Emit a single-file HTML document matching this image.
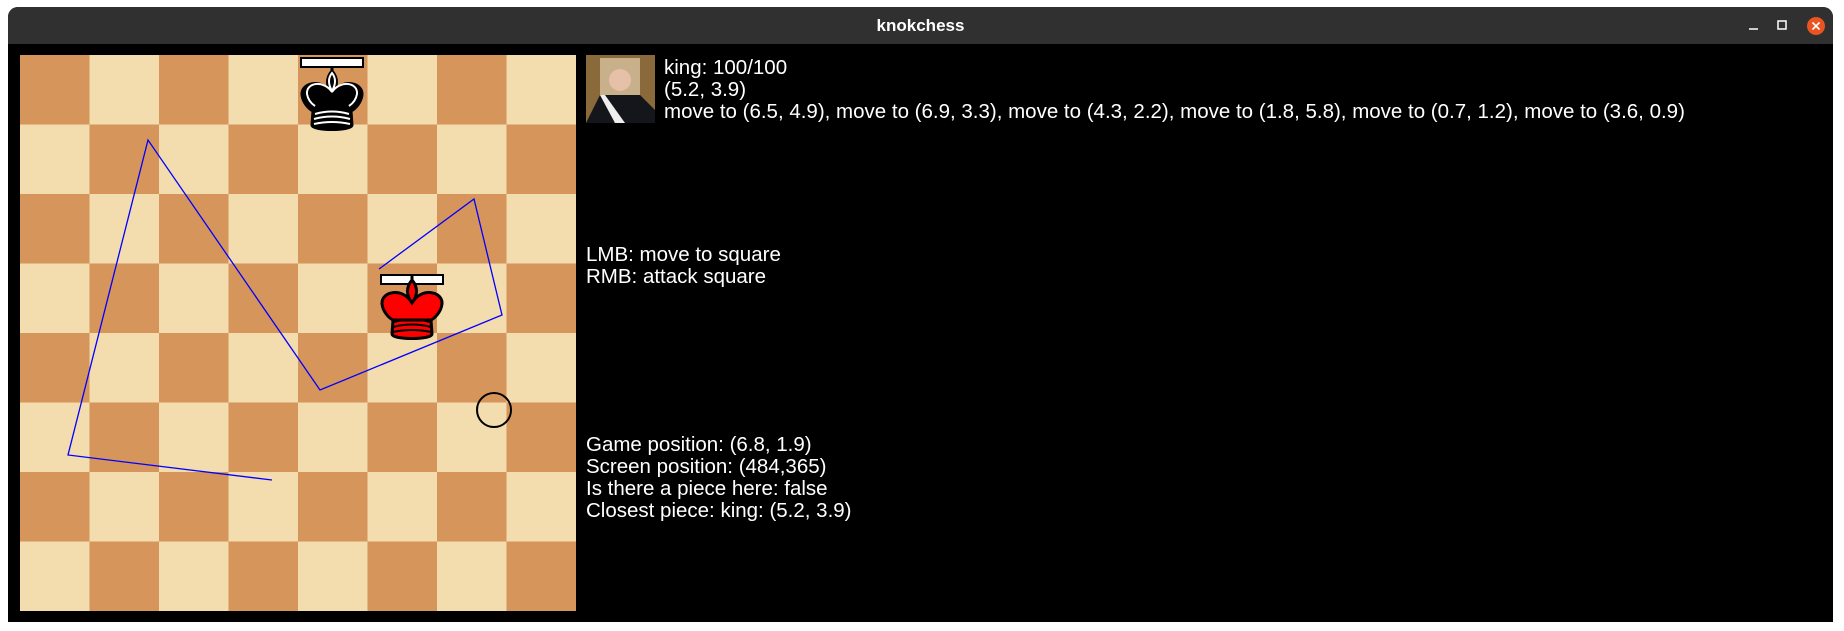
<!DOCTYPE html>
<html><head><meta charset="utf-8"><style>
body{margin:0;width:1844px;height:631px;background:#fff;overflow:hidden;position:relative;font-family:"Liberation Sans",sans-serif}
#win{position:absolute;left:8px;top:7px;width:1825px;height:615px;background:#000;border-radius:10px 10px 0 0;overflow:hidden}
#tb{position:absolute;left:0;top:0;right:0;height:37px;background:#303030;color:#fff;font-weight:bold;font-size:17px;text-align:center;line-height:37px}
.t{position:absolute;color:#fff;font-size:20.5px;line-height:22px;white-space:nowrap}
</style></head><body>
<div id="win"><div id="tb">knokchess</div></div>
<svg style="position:absolute;left:0;top:0" width="1844" height="631">
<defs>
<pattern id="bd" width="139" height="139" patternUnits="userSpaceOnUse" x="20" y="55">
<rect width="139" height="139" fill="#f3dcae"/>
<rect width="69.5" height="69.5" fill="#d6955a"/>
<rect x="69.5" y="69.5" width="69.5" height="69.5" fill="#d6955a"/>
</pattern>
<g id="king">
<line x1="0" y1="-29" x2="0" y2="-24" stroke="#000" stroke-width="3"/>
<path d="M0 -25 C-6 -18 -6 -10 0 -2 C6 -10 6 -18 0 -25Z" stroke="#000" stroke-width="3"/>
<path d="M0 -2 C-9 -18 -31 -14 -30 -1 C-29 7 -23 13 -19 15 L19 15 C23 13 29 7 30 -1 C31 -14 9 -18 0 -2Z" stroke="#000" stroke-width="3"/>
<path d="M-19 15 L-20 29 C-20 35 20 35 20 29 L19 15Z" stroke="#000" stroke-width="3"/>
</g>
</defs>
<line x1="1749" y1="29" x2="1758" y2="29" stroke="#fff" stroke-width="1.5"/>
<rect x="1778" y="21" width="8" height="8" fill="none" stroke="#fff" stroke-width="1.5"/>
<circle cx="1816" cy="26" r="9" fill="#e95420"/><path d="M1812.5 22.5L1819.5 29.5M1819.5 22.5L1812.5 29.5" stroke="#fff" stroke-width="1.6"/>
<rect x="20" y="55" width="556" height="556" fill="url(#bd)"/>
<rect x="301" y="58" width="62" height="9" fill="#fff" stroke="#000" stroke-width="2"/>
<use href="#king" x="332" y="96" fill="#000"/>
<path d="M332 73 C328 78 328 84 332 91 C336 84 336 78 332 73Z M332 92 C324 80 306 82 307 94 C308 100 312 104 315 106 M332 92 C340 80 358 82 357 94 C356 100 352 104 349 106" stroke="#fff" stroke-width="2" fill="none"/>
<path d="M315 114 Q332 109 349 114 M314 119 Q332 114 350 119 M314 124 Q332 120 350 124" stroke="#fff" stroke-width="2" fill="none"/>
<rect x="381" y="275" width="62" height="9" fill="#fff" stroke="#000" stroke-width="2"/>
<use href="#king" x="412" y="305" fill="#f00"/>
<path d="M394 322 Q412 317 430 322 M393 327 Q412 322 431 327 M393 332 Q412 328 431 332" stroke="#000" stroke-width="2" fill="none"/>
<polyline points="272,480 68,455 148,140 320,390 502,315 474,199 379,269" fill="none" stroke="#00f" stroke-width="1.3"/>
<circle cx="494" cy="410" r="17" fill="none" stroke="#000" stroke-width="2"/>
<rect x="586" y="55" width="69" height="68" fill="#8a6a3a"/>
<rect x="600" y="58" width="40" height="65" fill="#c8b08a"/>
<circle cx="620" cy="80" r="11" fill="#e6c0a8"/>
<path d="M586 123 L600 95 L640 95 L655 110 L655 123Z" fill="#14161c"/>
<path d="M600 95 L615 123 L625 123 L605 95Z" fill="#eee"/>
</svg>
<div class="t" style="left:664px;top:57px">king: 100/100<br>(5.2, 3.9)<br>move to (6.5, 4.9), move to (6.9, 3.3), move to (4.3, 2.2), move to (1.8, 5.8), move to (0.7, 1.2), move to (3.6, 0.9)</div>
<div class="t" style="left:586px;top:244px">LMB: move to square<br>RMB: attack square</div>
<div class="t" style="left:586px;top:434px">Game position: (6.8, 1.9)<br>Screen position: (484,365)<br>Is there a piece here: false<br>Closest piece: king: (5.2, 3.9)</div>
</body></html>
